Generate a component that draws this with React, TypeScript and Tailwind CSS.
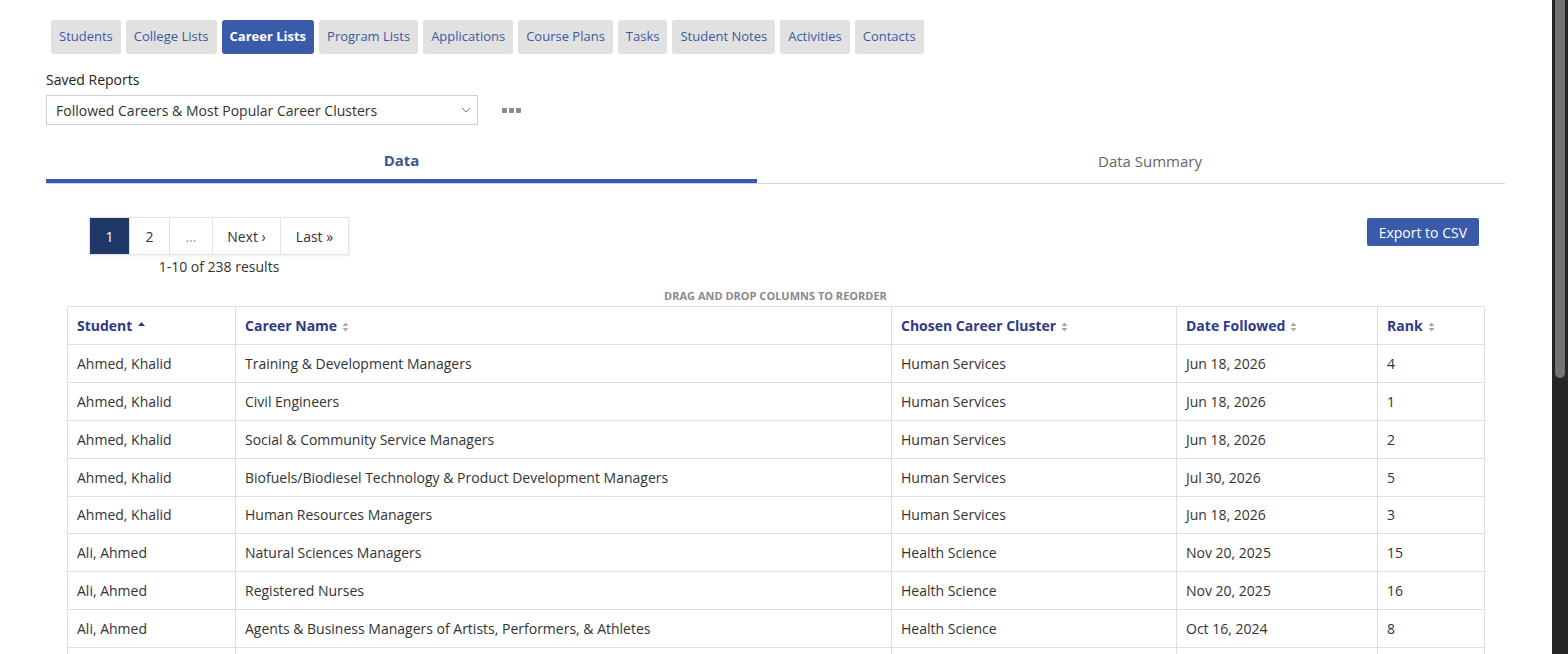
import React from 'react'

const navTabs = [
  'Students', 'College Lists', 'Career Lists', 'Program Lists', 'Applications',
  'Course Plans', 'Tasks', 'Student Notes', 'Activities', 'Contacts',
]

const rows = [
  ['Ahmed, Khalid', 'Training & Development Managers', 'Human Services', 'Jun 18, 2026', '4'],
  ['Ahmed, Khalid', 'Civil Engineers', 'Human Services', 'Jun 18, 2026', '1'],
  ['Ahmed, Khalid', 'Social & Community Service Managers', 'Human Services', 'Jun 18, 2026', '2'],
  ['Ahmed, Khalid', 'Biofuels/Biodiesel Technology & Product Development Managers', 'Human Services', 'Jul 30, 2026', '5'],
  ['Ahmed, Khalid', 'Human Resources Managers', 'Human Services', 'Jun 18, 2026', '3'],
  ['Ali, Ahmed', 'Natural Sciences Managers', 'Health Science', 'Nov 20, 2025', '15'],
  ['Ali, Ahmed', 'Registered Nurses', 'Health Science', 'Nov 20, 2025', '16'],
  ['Ali, Ahmed', 'Agents & Business Managers of Artists, Performers, & Athletes', 'Health Science', 'Oct 16, 2024', '8'],
]

const columns = [
  { label: 'Student', width: 'w-[168px]', sorted: true },
  { label: 'Career Name', width: 'w-[656px]' },
  { label: 'Chosen Career Cluster', width: 'w-[285px]' },
  { label: 'Date Followed', width: 'w-[201px]' },
  { label: 'Rank', width: 'w-[107px]' },
]

function SortIcon({ asc }: { asc?: boolean }) {
  if (asc) {
    return (
      <svg width="9" height="10" viewBox="0 0 9 10" className="ml-[5px] inline-block -translate-y-[2px]">
        <path d="M1 6 L4.5 2 L8 6 Z" fill="#2d3a86" />
      </svg>
    )
  }
  return (
    <svg width="9" height="12" viewBox="0 0 9 12" className="ml-[4px] inline-block">
      <path d="M1.5 5 L4.5 1.5 L7.5 5 Z" fill="#a9a9a9" />
      <path d="M1.5 7 L4.5 10.5 L7.5 7 Z" fill="#a9a9a9" />
    </svg>
  )
}

export default function App() {
  return (
    <div className="flex h-[654px] w-full overflow-hidden bg-white font-['Open_Sans',sans-serif] text-[#333]">
      <main className="min-w-0 flex-1 pl-[46px] pr-[47px] pt-[20px]">
        {/* top nav */}
        <div className="flex gap-[5px] pl-[5px]">
          {navTabs.map(t => (
            <button
              key={t}
              className={
                t === 'Career Lists'
                  ? 'h-[34px] rounded-[3px] bg-[#3a5ba9] px-[8px] text-[13px] font-bold text-white'
                  : 'h-[34px] rounded-[3px] bg-[#e1e1e1] px-[8px] text-[13px] text-[#3b5a9f]'
              }
            >
              {t}
            </button>
          ))}
        </div>

        {/* saved reports */}
        <div className="mt-[16px]">
          <div className="text-[14px] leading-[20px] text-[#222]">Saved Reports</div>
          <div className="mt-[5px] flex items-center">
            <div className="flex h-[30px] w-[432px] items-center justify-between border border-[#cfcfcf] pl-[9px] pr-[6px] text-[14px] text-[#333]">
              <span>Followed Careers &amp; Most Popular Career Clusters</span>
              <svg width="10" height="6" viewBox="0 0 10 6">
                <path d="M1 1 L5 5 L9 1" fill="none" stroke="#777" strokeWidth="1" />
              </svg>
            </div>
            <div className="ml-[24px] flex gap-[2px]">
              <span className="h-[5px] w-[5px] rounded-[1px] bg-[#8a8a8a]" />
              <span className="h-[5px] w-[5px] rounded-[1px] bg-[#8a8a8a]" />
              <span className="h-[5px] w-[5px] rounded-[1px] bg-[#8a8a8a]" />
            </div>
          </div>
        </div>

        {/* data tabs */}
        <div className="mt-[19px] flex border-b border-[#d5d5d5]">
          <div className="flex h-[39px] w-[711px] items-center justify-center border-b-[4px] border-[#3a5ba9] pb-[3px] text-[15px] font-bold text-[#3a5798]">
            Data
          </div>
          <div className="flex h-[39px] flex-1 items-center justify-center pb-[5px] pl-[38px] text-[15px] text-[#666]">
            Data Summary
          </div>
        </div>

        {/* pagination + export */}
        <div className="mt-[33px] flex items-start justify-between pl-[43px] pr-[26px]">
          <div className="flex flex-col items-center">
            <div className="flex h-[38px] border border-[#e3e3e3] text-[14px] shadow-[0_1px_3px_rgba(0,0,0,0.08)]">
              <span className="flex w-[39px] items-center justify-center bg-[#1f3867] text-white">1</span>
              <span className="flex w-[40px] items-center justify-center border-l border-[#e3e3e3]">2</span>
              <span className="flex w-[43px] items-center justify-center border-l border-[#e3e3e3] text-[#999]">…</span>
              <span className="flex w-[68px] items-center justify-center border-l border-[#e3e3e3]">Next ›</span>
              <span className="flex w-[68px] items-center justify-center border-l border-[#e3e3e3]">Last »</span>
            </div>
            <div className="mt-[3px] text-[14px] leading-[18px]">1-10 of 238 results</div>
          </div>
          <button className="mt-[1px] h-[28px] rounded-[2px] bg-[#3a5ba9] px-[12px] text-[14px] text-white">
            Export to CSV
          </button>
        </div>

        <div className="mt-[13px] text-center text-[11px] font-bold leading-[14px] text-[#8a8a8a]">
          DRAG AND DROP COLUMNS TO REORDER
        </div>

        {/* table */}
        <div className="mx-[21px] mt-[3px]">
          <table className="w-[1417px] table-fixed border-collapse text-[14px]">
            <colgroup>
              {columns.map(c => <col key={c.label} className={c.width} />)}
            </colgroup>
            <thead>
              <tr>
                {columns.map(c => (
                  <th
                    key={c.label}
                    className="h-[38px] border border-[#dedede] px-[9px] text-left font-bold text-[#2d3a86]"
                  >
                    {c.label}
                    <SortIcon asc={c.sorted} />
                  </th>
                ))}
              </tr>
            </thead>
            <tbody>
              {rows.map((r, i) => (
                <tr key={i} className="h-[37.875px]">
                  {r.map((cell, j) => (
                    <td key={j} className="border border-[#dedede] px-[9px] text-[#333]">
                      {cell}
                    </td>
                  ))}
                </tr>
              ))}
              <tr className="h-[38px]">
                {columns.map(c => <td key={c.label} className="border border-[#dedede]" />)}
              </tr>
            </tbody>
          </table>
        </div>
      </main>

      {/* scrollbar */}
      <div className="flex h-full w-[16px] shrink-0 justify-center bg-neutral-800">
        <div className="h-[378px] w-[10px] rounded-b-[5px] bg-neutral-500" />
      </div>
    </div>
  )
}
